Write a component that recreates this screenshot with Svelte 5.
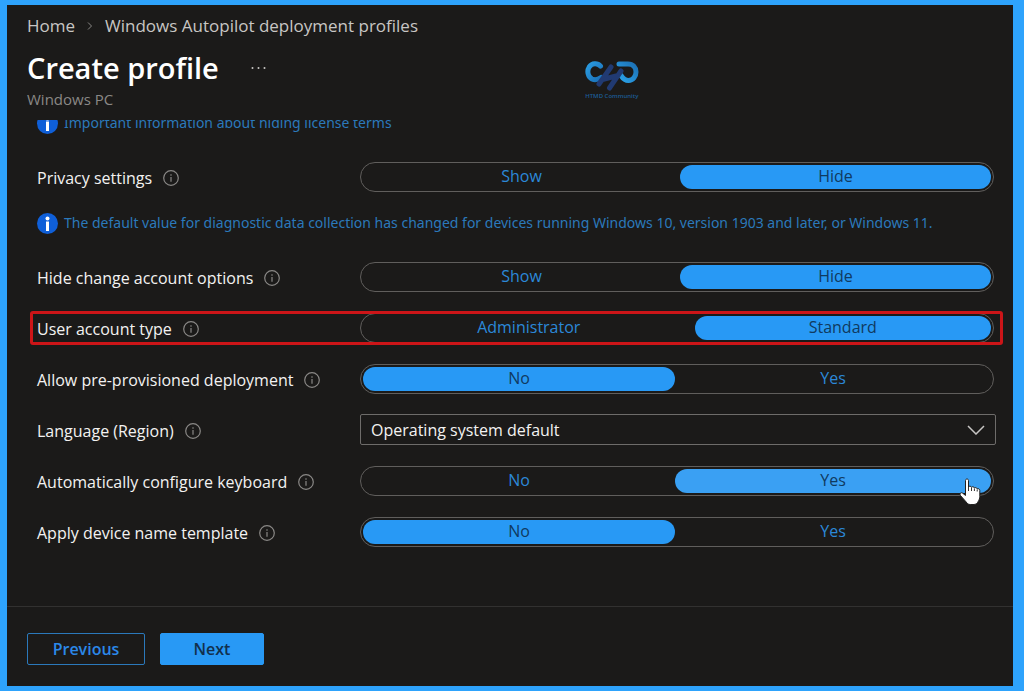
<script>
  let rows = $state([
    { id: 'license', note: 'Important information about hiding license terms' },
    { id: 'privacy', label: 'Privacy settings', options: ['Show', 'Hide'], value: 'Hide' },
    {
      id: 'diagnostic',
      note: 'The default value for diagnostic data collection has changed for devices running Windows 10, version 1903 and later, or Windows 11.'
    },
    { id: 'change-account', label: 'Hide change account options', options: ['Show', 'Hide'], value: 'Hide' },
    { id: 'account-type', label: 'User account type', options: ['Administrator', 'Standard'], value: 'Standard', marked: true },
    { id: 'pre-provisioned', label: 'Allow pre-provisioned deployment', options: ['No', 'Yes'], value: 'No' },
    { id: 'language', label: 'Language (Region)', select: 'Operating system default' },
    { id: 'keyboard', label: 'Automatically configure keyboard', options: ['No', 'Yes'], value: 'Yes', pointed: true },
    { id: 'name-template', label: 'Apply device name template', options: ['No', 'Yes'], value: 'No' }
  ]);
</script>

<div class="frame">
  <main class="blade">
    <header>
      <nav class="crumbs">
        <a href="#home">Home</a>
        <svg class="sep" viewBox="0 0 6 10"><path d="M1 1.5 4.5 5 1 8.5" /></svg>
        <a href="#profiles">Windows Autopilot deployment profiles</a>
      </nav>
      <div class="heading">
        <h1>Create profile</h1>
        <button class="more" type="button">
          <svg viewBox="0 0 16 4"><circle cx="1.5" cy="2" r="1" /><circle cx="7.5" cy="2" r="1" /><circle cx="13.5" cy="2" r="1" /></svg>
        </button>
        <div class="logo">
          <svg viewBox="0 0 54 32">
            <defs>
              <linearGradient id="ringLeft" x1="0" y1="0" x2="1" y2="1">
                <stop offset="0" stop-color="#2a9be0" />
                <stop offset="1" stop-color="#1a70b8" />
              </linearGradient>
              <linearGradient id="ringRight" x1="1" y1="0" x2="0" y2="1">
                <stop offset="0" stop-color="#1c70b4" />
                <stop offset="1" stop-color="#2ba4ea" />
              </linearGradient>
            </defs>
            <path d="M15.5 6.2C12.5 2.8 7 3 4.2 7 1.6 11 3 17 7 19 10 20.300 13 19.600 16 17.500" fill="none" stroke="url(#ringLeft)" stroke-width="5" stroke-linecap="round" />
            <path d="M34 4H43C48 4 51 7.500 51 12S48 20.500 43.500 20.500C40 20.500 38 18.500 36 15.500" fill="none" stroke="url(#ringRight)" stroke-width="5" stroke-linecap="round" />
            <path d="M26 7 14 24M36 11 24.500 28M17.500 19.500 33 15.500" fill="none" stroke="#213a72" stroke-width="5" stroke-linecap="round" stroke-linejoin="round" />
          </svg>
          <span>HTMD Community</span>
        </div>
      </div>
      <p>Windows PC</p>
    </header>

    <form id="profile" class="settings">
      <div class="list">
        {#each rows as row (row.id)}
          {#if row.note}
            <a class="note" href="#{row.id}">
              <svg viewBox="0 0 21 21">
                <circle cx="10.500" cy="10.500" r="10.500" fill="#0f5fd8" />
                <circle cx="10.500" cy="5.500" r="2" fill="#fff" />
                <rect x="9" y="8.500" width="3" height="9.500" fill="#fff" />
              </svg>
              <span>{row.note}</span>
            </a>
          {:else}
            <div class="row" class:marked={row.marked}>
              <div class="label">
                {#if row.select}
                  <label for={row.id}>{row.label}</label>
                {:else}
                  <span id="{row.id}-label">{row.label}</span>
                {/if}
                <svg viewBox="0 0 16 16">
                  <circle cx="8" cy="8" r="7.300" fill="none" stroke="#8a8886" stroke-width="1.200" />
                  <path d="M8 4.300v1.400M8 7v4.700" stroke="#8a8886" stroke-width="1.200" />
                </svg>
              </div>
              {#if row.select}
                <div class="select">
                  <select id={row.id}><option>{row.select}</option></select>
                  <svg viewBox="0 0 18 10"><path d="M1 1l8 8 8-8" /></svg>
                </div>
              {:else}
                <div class="pill" role="radiogroup" aria-labelledby="{row.id}-label">
                  {#each row.options as option}
                    <label class:hot={row.pointed}>
                      <input type="radio" name={row.id} value={option} bind:group={row.value} />
                      <span>{option}</span>
                    </label>
                  {/each}
                  {#if row.pointed}
                    <svg class="pointer" viewBox="0 0 22 28">
                      <path d="M6.500 2.500c0-2 3-2 3 0V9c.6-1.200 2.700-1 3 .3.700-1 2.600-.7 2.900.7.900-.8 2.600-.4 2.800.9 1.300-.6 2.600.2 2.600 1.600v6c0 2-.8 3.500-1.800 5.200-.6 1.400-2 2.600-4 2.800h-3.800c-2 0-3-1-4-2.500L1.200 17.200c-1-1.700 1-3.300 2.500-2l2.800 2.300z" />
                      <path class="knuckles" d="M9.500 9v4M12.500 9.500V13M15.400 10.500V13M18.200 11.500V13.500" />
                    </svg>
                  {/if}
                </div>
              {/if}
            </div>
          {/if}
        {/each}
      </div>
    </form>

    <footer>
      <button class="previous" type="button">Previous</button>
      <button class="next" type="submit" form="profile">Next</button>
    </footer>
  </main>
</div>

<style>
  :global(body) {
    margin: 0;
    background: #2ea3fc;
  }
  .frame {
    box-sizing: border-box;
    min-height: 100vh;
    padding: 5px 11px 5px 7px;
    display: flex;
    background: #2ea3fc;
    font-family: "Open Sans", "Noto Sans", sans-serif;
    font-size: 16px;
    line-height: 22px;
  }
  .blade {
    flex: 1;
    min-width: 0;
    display: flex;
    flex-direction: column;
    background: #1b1a19;
    color: #f3f2f1;
  }
  button, select {
    font: inherit;
  }
  header {
    padding: 10px 20px 12px;
  }
  .crumbs {
    display: flex;
    align-items: center;
    gap: 12px;
    color: #c8c6c4;
    font-size: 17px;
  }
  .crumbs a {
    color: inherit;
    text-decoration: none;
  }
  .sep {
    width: 6px;
    height: 10px;
    fill: none;
    stroke: #8a8886;
  }
  .heading {
    display: flex;
    align-items: center;
    height: 44px;
    margin-top: 9px;
  }
  h1 {
    margin: 0;
    font-size: 29px;
    font-weight: 600;
    line-height: 40px;
    color: #fff;
  }
  .more {
    width: 32px;
    height: 24px;
    margin-left: 24px;
    padding: 0 8px;
    border: 0;
    background: none;
  }
  .more svg {
    display: block;
    width: 16px;
    height: 4px;
    fill: #c8c6c4;
  }
  .logo {
    margin: 24px 0 0 310px;
    text-align: center;
    color: #1c5c96;
    font-size: 6px;
    font-weight: 600;
    line-height: 8px;
    white-space: nowrap;
  }
  .logo svg {
    display: block;
    width: 54px;
    height: 32px;
    margin: 0 auto;
  }
  header p {
    margin: 0;
    color: #8a8886;
    font-size: 15px;
    line-height: 18px;
  }
  .settings {
    flex: 1;
    overflow: hidden;
    padding: 0 17px 20px 30px;
  }
  .list {
    display: flex;
    flex-direction: column;
    gap: 20px;
    margin-top: -8px;
  }
  .note {
    display: flex;
    align-items: center;
    gap: 6px;
    margin-bottom: 7px;
    color: #2b79bb;
    font-family: "Noto Sans", "Open Sans", sans-serif;
    font-size: 14px;
    text-decoration: none;
    white-space: nowrap;
  }
  .note svg {
    flex: none;
    width: 21px;
    height: 21px;
  }
  .row {
    position: relative;
    display: grid;
    grid-template-columns: 323px minmax(0, 1fr);
    align-items: center;
    height: 31px;
  }
  .marked::after {
    content: "";
    position: absolute;
    inset: -1px -7px -2px;
    border: 3px solid #cc1518;
    border-radius: 3px;
    pointer-events: none;
  }
  .label {
    display: flex;
    align-items: center;
    gap: 11px;
    padding-top: 3px;
    white-space: nowrap;
  }
  .label svg {
    width: 16px;
    height: 16px;
  }
  .pill {
    position: relative;
    display: flex;
    box-sizing: border-box;
    height: 30px;
    margin-right: 2px;
    padding: 2px;
    border: 1px solid #605e5c;
    border-radius: 15px;
  }
  .pill label {
    flex: 1 1 auto;
    position: relative;
    cursor: pointer;
  }
  .pill input {
    position: absolute;
    opacity: 0;
    margin: 0;
  }
  .pill span {
    display: block;
    padding-bottom: 2px;
    border-radius: 12px;
    color: #2b88d8;
    line-height: 22px;
    text-align: center;
  }
  .pill input:checked + span {
    background: #2899f5;
    color: #103a60;
  }
  .pill .hot input:checked + span {
    background: #3aa0f3;
  }
  .pointer {
    position: absolute;
    right: 12px;
    top: 11px;
    width: 22px;
    height: 28px;
    fill: #fff;
    stroke: #222;
    pointer-events: none;
  }
  .knuckles {
    fill: none;
    stroke: #333;
  }
  .select {
    position: relative;
  }
  select {
    display: block;
    box-sizing: border-box;
    width: 100%;
    height: 31px;
    padding: 0 36px 0 10px;
    appearance: none;
    border: 1px solid #6e6c6a;
    border-radius: 2px;
    background: #1b1a19;
    color: #f3f2f1;
  }
  .select svg {
    position: absolute;
    right: 11px;
    top: 11px;
    width: 18px;
    height: 10px;
    fill: none;
    stroke: #c8c6c4;
    stroke-width: 1.500;
    pointer-events: none;
  }
  footer {
    display: flex;
    gap: 15px;
    padding: 26px 20px 21px;
    border-top: 1px solid #323130;
  }
  footer button {
    box-sizing: border-box;
    height: 32px;
    padding-bottom: 2px;
    border-radius: 2px;
    font-weight: 600;
  }
  .previous {
    width: 118px;
    border: 1px solid #2b79bb;
    background: none;
    color: #2b88e8;
  }
  .next {
    width: 104px;
    border: 1px solid #2899f5;
    background: #2899f5;
    color: #12304c;
  }
</style>
